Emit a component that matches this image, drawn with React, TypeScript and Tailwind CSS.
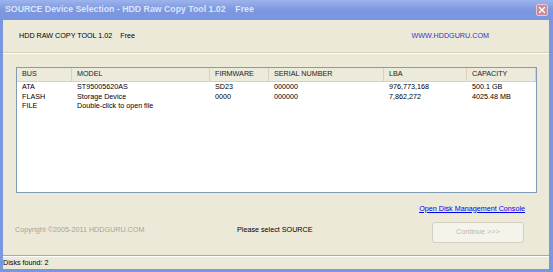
import { X } from 'lucide-react'

const columns = [
  { label: 'BUS', w: 'w-[55px]' },
  { label: 'MODEL', w: 'w-[138px]' },
  { label: 'FIRMWARE', w: 'w-[59px]' },
  { label: 'SERIAL NUMBER', w: 'w-[115px]' },
  { label: 'LBA', w: 'w-[83px]' },
  { label: 'CAPACITY', w: 'flex-1' },
]

const rows = [
  ['ATA', 'ST95005620AS', 'SD23', '000000', '976,773,168', '500.1 GB'],
  ['FLASH', 'Storage Device', '0000', '000000', '7,862,272', '4025.48 MB'],
  ['FILE', 'Double-click to open file', '', '', '', ''],
]

export default function App() {
  return (
    <div className="w-[553px] h-[272px] bg-[#7b95de] flex flex-col font-['Liberation_Sans',Arial,sans-serif] overflow-hidden">
      {/* title bar */}
      <div className="h-[20px] shrink-0 flex items-center pl-[5px] pr-[5px] bg-gradient-to-b from-[#9cb3ec] via-[#7d97e0] to-[#7b95de]">
        <span className="text-[8.75px] font-bold text-[#dbe5f8] whitespace-pre">
          SOURCE Device Selection - HDD Raw Copy Tool 1.02{'    '}Free
        </span>
        <div className="ml-auto w-[12px] h-[12px] rounded-[2px] bg-[#c98c9a] border border-[#e8c6cf] flex items-center justify-center">
          <X size={10} strokeWidth={3} className="text-white" />
        </div>
      </div>

      <div className="flex-1 flex flex-col pl-[3px] pr-[4px] pb-[3px]">
        <div className="flex-1 bg-[#ece9d8] flex flex-col text-[7.2px] text-black">
          {/* header */}
          <div className="h-[32px] flex items-center pl-[16px] pr-[60px]">
            <span className="whitespace-pre">HDD RAW COPY TOOL 1.02    Free</span>
            <span className="ml-auto text-[#3333cc]">WWW.HDDGURU.COM</span>
          </div>
          <div className="h-[1px] bg-[#d3cfbd]" />
          <div className="h-[1px] bg-white" />

          {/* device list */}
          <div className="mt-[13px] ml-[13px] w-[521px] h-[126px] bg-white border border-[#7f9db9] flex flex-col">
            <div className="h-[14px] flex bg-[#ebeadb] border-b border-[#d6d2c2]">
              {columns.map((c) => (
                <div
                  key={c.label}
                  className={`${c.w} flex items-center pl-[5px] border-r border-[#d6d2c2] text-[#222]`}
                >
                  {c.label}
                </div>
              ))}
            </div>
            <div className="pt-[1px]">
              {rows.map((r) => (
                <div key={r[0]} className="flex h-[9.5px] items-center">
                  {r.map((cell, i) => (
                    <div key={i} className={`${columns[i].w} pl-[5px] whitespace-nowrap`}>
                      {cell}
                    </div>
                  ))}
                </div>
              ))}
            </div>
          </div>

          {/* footer */}
          <div className="flex justify-end pr-[24px] mt-[10px] h-[12px] items-center">
            <span className="text-[#0000ee] underline">Open Disk Management Console</span>
          </div>
          <div className="flex items-start mt-[7px] h-[21px]">
            <span className="ml-[12px] w-[222px] mt-[3px] text-[#a9a594]">Copyright ©2005-2011 HDDGURU.COM</span>
            <span className="mt-[3px]">Please select SOURCE</span>
            <div className="ml-auto mr-[25px] w-[92px] h-[21px] rounded-[3px] border border-[#d2cfc0] bg-[#f5f4ea] flex items-center justify-center text-[#bcb8a6]">
              Continue &gt;&gt;&gt;
            </div>
          </div>

          {/* status bar */}
          <div className="mt-auto h-[1px] bg-[#aca899]" />
          <div className="h-[13px] flex items-center border-t border-white">
            <span>Disks found: 2</span>
          </div>
        </div>
      </div>
    </div>
  )
}
